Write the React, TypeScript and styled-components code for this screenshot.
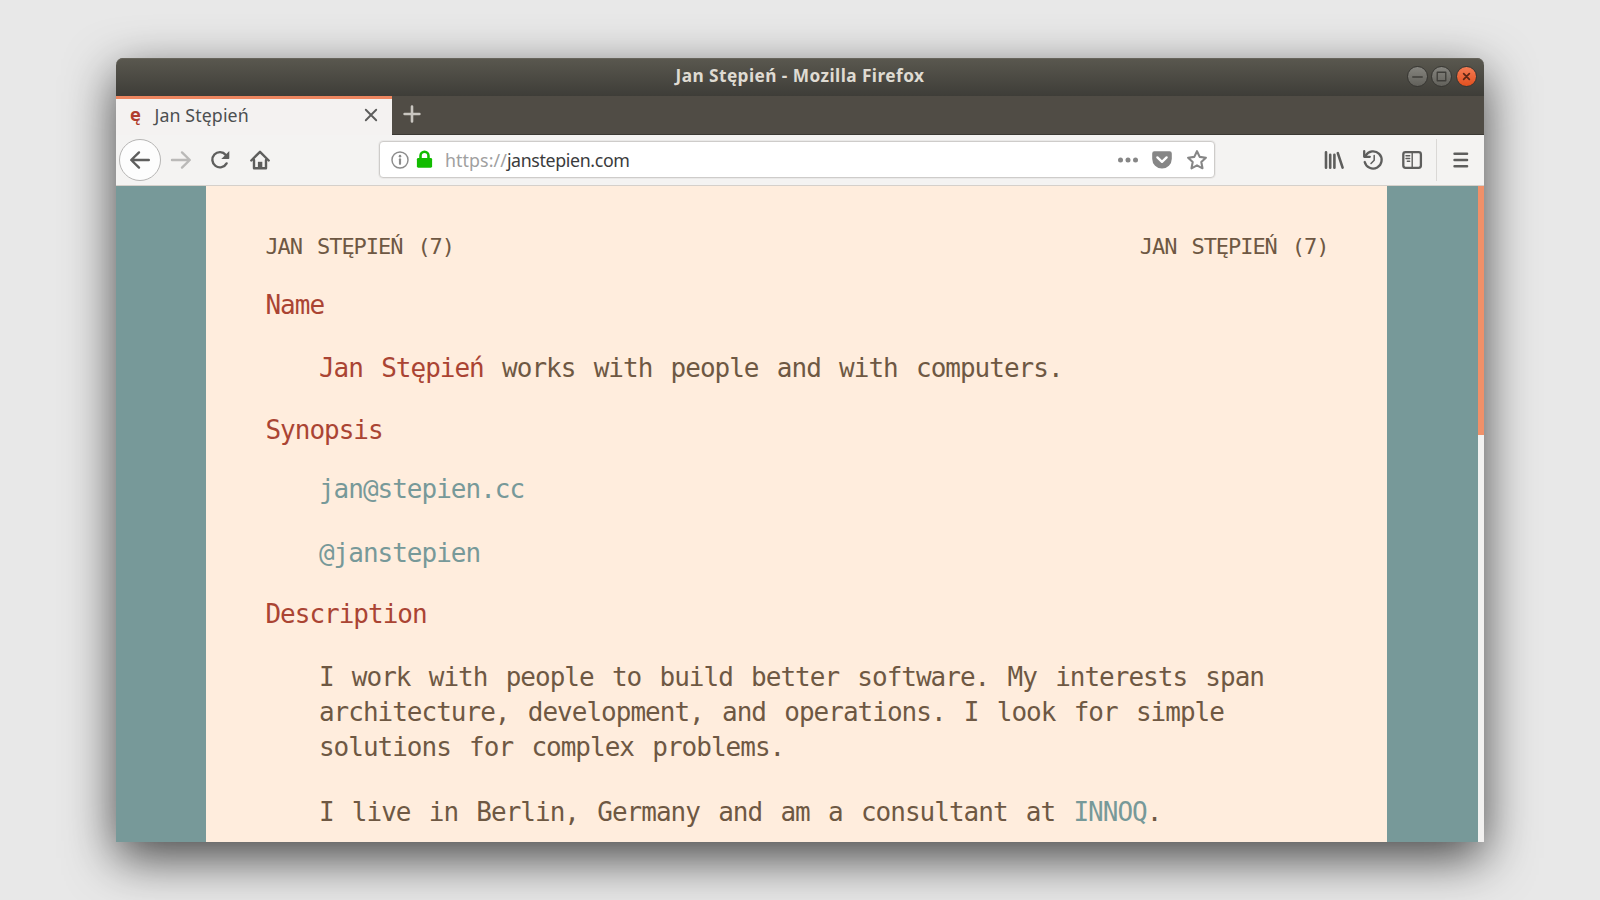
import React from "react";
import styled, { createGlobalStyle } from "styled-components";

const GlobalStyle = createGlobalStyle`
  * { box-sizing: border-box; }
  html, body { margin: 0; padding: 0; }
  body { background: #e8e8e8; overflow: hidden; }
`;

const ui = `"Noto Sans", "Open Sans", sans-serif`;
const mono = `"DejaVu Sans Mono", "Liberation Mono", monospace`;

const Desktop = styled.div`
  width: 1600px;
  height: 900px;
  padding: 57.5px 116px 0;
  background: #e8e8e8;
  overflow: hidden;
`;

const Window = styled.div`
  width: 1368px;
  height: 784.5px;
  display: flex;
  flex-direction: column;
  border-radius: 7px 7px 0 0;
  box-shadow: 0 16px 50px rgba(0, 0, 0, 0.7);
`;

const TitleBar = styled.header`
  flex: none;
  height: 38px;
  display: grid;
  grid-template-columns: 1fr auto 1fr;
  align-items: center;
  padding: 0 7px 1px 0;
  border-radius: 7px 7px 0 0;
  background: linear-gradient(#5a584f, #3e3d38);
  box-shadow: inset 0 1px 0 #66645b;
`;

const Title = styled.h1`
  grid-column: 2;
  margin: 0;
  padding-left: 7px;
  font: 700 17.3px/36px ${ui};
  letter-spacing: 0.43px;
  color: #dfdbd2;
  white-space: nowrap;
`;

const WindowButtons = styled.div`
  display: flex;
  justify-content: flex-end;
  gap: 3.6px;
`;

const WindowButton = styled.span<{ $close?: boolean }>`
  width: 21px;
  height: 21px;
  border-radius: 50%;
  border: 1px solid #373632;
  display: flex;
  background: ${(p) =>
    p.$close ? "linear-gradient(#f47c54, #e2501f)" : "linear-gradient(#85847e, #62615b)"};
  svg { margin: auto; }
`;

const TabStrip = styled.nav`
  flex: none;
  height: 39.5px;
  display: flex;
  background: #504c45;
  box-shadow: inset 0 -1px 0 #3b3934;
`;

const Tab = styled.div`
  width: 276px;
  height: 39.5px;
  padding: 0 13px 3px 14px;
  display: flex;
  align-items: center;
  background: #f4f2f1;
  border-top: 3px solid #ee8660;
`;

const Favicon = styled.span`
  width: 14px;
  font: 700 18px/34px ${mono};
  color: #b03e2e;
`;

const TabLabel = styled.span`
  flex: 1;
  padding-left: 10.5px;
  font: 400 17.8px/35px ${ui};
  letter-spacing: 0.1px;
  color: #4c4f50;
`;

const NewTab = styled.span`
  width: 40px;
  padding-bottom: 2px;
  display: flex;
  svg { margin: auto; }
`;

const Toolbar = styled.div`
  flex: none;
  height: 50.5px;
  padding: 0 3px 0 3px;
  display: flex;
  align-items: center;
  background: #f4f3f2;
  border-bottom: 1.5px solid #d5d0cb;
`;

const BackButton = styled.span`
  width: 42px;
  height: 42px;
  border-radius: 50%;
  border: 1px solid #b6b5b4;
  background: #fdfdfd;
  display: flex;
  svg { margin: auto; }
`;

const Slot = styled.span<{ $w?: number }>`
  width: ${(p) => p.$w ?? 39.6}px;
  display: flex;
  justify-content: center;
`;

const UrlBar = styled.div`
  margin-left: 99.2px;
  width: 836px;
  height: 37px;
  padding: 0 7px 0 11px;
  display: flex;
  align-items: center;
  background: #fff;
  border: 1px solid #ceccca;
  border-radius: 4px;
  box-shadow: 0 0 0 1px rgba(0, 0, 0, 0.04);
`;

const Url = styled.span`
  flex: 1;
  padding-left: 10.5px;
  font: 400 17.8px/34px ${ui};
  letter-spacing: -0.36px;
  color: #3a3b3c;
  white-space: nowrap;
`;

const Scheme = styled.span`
  letter-spacing: 0.08px;
  color: #a0a0a0;
`;

const Gap = styled.span<{ $w: number }>`
  width: ${(p) => p.$w}px;
`;

const Tools = styled.div`
  margin-left: auto;
  display: flex;
  align-items: center;
`;

const Separator = styled.span`
  width: 1px;
  height: 42px;
  margin: 0 0 0 4.5px;
  background: #dad8d6;
`;

const Viewport = styled.main`
  flex: 1;
  min-height: 0;
  display: flex;
  background: #779999;
  overflow: hidden;
`;

const Paper = styled.article`
  width: 1181px;
  margin-left: 90.4px;
  padding: 46px 59px 0 59px;
  background: #ffeddd;
  color: #6e5843;
  font: 400 26px/35.2px ${mono};
  letter-spacing: -0.99px;
  word-spacing: 3.6px;
`;

const PageHeader = styled.div`
  display: flex;
  justify-content: space-between;
  font-size: 22px;
  line-height: 30px;
  letter-spacing: -1.06px;
  word-spacing: 2.9px;
`;

const Heading = styled.h2<{ $top?: number }>`
  margin: ${(p) => p.$top ?? 26}px 0 0;
  font: inherit;
  color: #aa4433;
`;

const Para = styled.p<{ $top?: number }>`
  margin: ${(p) => p.$top ?? 28}px 0 0 53.5px;
  white-space: nowrap;
`;

const Accent = styled.strong`
  font-weight: 400;
  color: #aa4433;
`;

const Link = styled.a`
  color: #779999;
`;

const Track = styled.div`
  width: 6px;
  margin-left: auto;
  background: #f2f1f0;
`;

const Thumb = styled.div`
  height: 249px;
  background: #f09069;
`;

const Icon = styled.svg.attrs({ viewBox: "0 0 20 20", fill: "none" })<{ $c?: string; $s?: number }>`
  width: ${(p) => p.$s ?? 20}px;
  height: ${(p) => p.$s ?? 20}px;
  flex: none;
  overflow: visible;
  color: ${(p) => p.$c ?? "#5e5e5d"};
  stroke: currentColor;
  stroke-width: 2.4;
  stroke-linecap: round;
  stroke-linejoin: round;
`;

const Line = styled.g<{ $w?: number; $c?: string }>`
  stroke: ${(p) => p.$c ?? "currentColor"};
  stroke-width: ${(p) => p.$w ?? 2.4};
`;

const Filled = styled.g`
  fill: currentColor;
  stroke: none;
`;

export default function App() {
  return (
    <Desktop>
      <GlobalStyle />
      <Window>
        <TitleBar>
          <Title>Jan Stępień - Mozilla Firefox</Title>
          <WindowButtons>
            <WindowButton>
              <Icon $s={19} $c="#3f3e3a"><Line $w={1.4}><path d="M5 10.500h10" /></Line></Icon>
            </WindowButton>
            <WindowButton>
              <Icon $s={19} $c="#3f3e3a"><Line $w={1.4}><path d="M5.5 5.500h9v9h-9z" /></Line></Icon>
            </WindowButton>
            <WindowButton $close>
              <Icon $s={19} $c="#5c2615"><Line $w={1.8}><path d="M7 7l6 6M13 7l-6 6" /></Line></Icon>
            </WindowButton>
          </WindowButtons>
        </TitleBar>

        <TabStrip>
          <Tab>
            <Favicon>ę</Favicon>
            <TabLabel>Jan Stępień</TabLabel>
            <Icon $s={16} $c="#5d5d5c"><Line><path d="M3.5 3.500l13 13M16.500 3.500l-13 13" /></Line></Icon>
          </Tab>
          <NewTab>
            <Icon $c="#c9c6c0"><Line $w={2.6}><path d="M10 2.600v14.800M2.600 10h14.800" /></Line></Icon>
          </NewTab>
        </TabStrip>

        <Toolbar>
          <BackButton>
            <Icon><path d="M18.800 10H1.500M9 2.400L1.200 10L9 17.600" /></Icon>
          </BackButton>
          <Slot>
            <Icon $c="#bab9b8"><path d="M1 10h17.500M11 2.400l7.800 7.600L11 17.600" /></Icon>
          </Slot>
          <Slot>
            <Icon>
              <path d="M15.800 4.900A7.600 7.600 0 1 0 16.600 13.400" />
              <Filled><path d="M19.300 1v7.300a.8.8 0 0 1-.8.8h-7.200z" /></Filled>
            </Icon>
          </Slot>
          <Slot>
            <Icon>
              <path d="M1.300 10.500L10 1.800l8.700 8.700" />
              <path d="M4 10v8.200h12V10" />
              <Filled><path d="M7.900 19v-7.200h4.400V19z" /></Filled>
            </Icon>
          </Slot>

          <UrlBar>
            <Icon $s={18} $c="#8c8c8c">
              <Line $w={1.6}><circle cx="10" cy="10" r="8.900" /></Line>
              <Line $w={2.4}><path d="M10 9.300v5" /></Line>
              <Filled><circle cx="10" cy="5.700" r="1.400" /></Filled>
            </Icon>
            <Gap $w={6.5} />
            <Icon $s={19} $c="#12bc00">
              <Line $w={2.7}><path d="M5.800 9V6a4.200 4.200 0 0 1 8.400 0V9" /></Line>
              <Filled><rect x="2" y="8.300" width="16" height="10.300" rx="1.400" /></Filled>
            </Icon>
            <Url><Scheme>https://</Scheme>janstepien.com</Url>
            <Icon $c="#868686">
              <Filled>
                <circle cx="2.500" cy="10" r="2.500" />
                <circle cx="10" cy="10" r="2.500" />
                <circle cx="17.500" cy="10" r="2.500" />
              </Filled>
            </Icon>
            <Gap $w={14.5} />
            <Icon $c="#868686">
              <Filled><path d="M2.400 1.300h15.200a2.200 2.200 0 0 1 2.200 2.200v5.300a9.800 9.800 0 0 1-19.600 0V3.500a2.200 2.200 0 0 1 2.200-2.200z" /></Filled>
              <Line $c="#fff"><path d="M5.400 7.400L10 11.800l4.600-4.400" /></Line>
            </Icon>
            <Gap $w={14.5} />
            <Icon $c="#868686">
              <Line $w={2.1}>
                <path d="M10 1.200l2.700 5.700 6.200.8-4.600 4.300 1.200 6.300L10 15.300l-5.500 3 1.200-6.300L1.100 7.700l6.200-.8z" />
              </Line>
            </Icon>
          </UrlBar>

          <Tools>
            <Slot $w={39}>
              <Icon>
                <Line $w={2.6}><path d="M2 2.200v15.600M6.200 4.800v13M10.400 4.800v13M13.800 3.200l4.800 14.400" /></Line>
              </Icon>
            </Slot>
            <Slot $w={39}>
              <Icon>
                <Line $w={2.3}>
                  <path d="M2.600 5.600A8.600 8.600 0 1 1 1.700 12" />
                  <path d="M1.200 1.200v5.600h5.600" />
                </Line>
                <Line $w={1.5}><path d="M11.200 5.500v4.800L8 13.500" /></Line>
              </Icon>
            </Slot>
            <Slot $w={39}>
              <Icon>
                <Line $w={2.3}><rect x="1.300" y="2.200" width="17.600" height="15.600" rx="2.200" /></Line>
                <Line $w={1.4}><path d="M10.200 2.200v15.600M4 5.800h3.700M4 8.500h3.700M5.300 11.200h2.400" /></Line>
              </Icon>
            </Slot>
            <Separator />
            <Slot $w={44.5}>
              <Icon>
                <path d="M5.500 3.700h12.600M5.500 10h12.600M5.500 16.300h12.600" />
              </Icon>
            </Slot>
          </Tools>
        </Toolbar>

        <Viewport>
          <Paper>
            <PageHeader>
              <span>JAN STĘPIEŃ (7)</span>
              <span>JAN STĘPIEŃ (7)</span>
            </PageHeader>
            <Heading>Name</Heading>
            <Para><Accent>Jan Stępień</Accent> works with people and with computers.</Para>
            <Heading $top={27.3}>Synopsis</Heading>
            <Para $top={24}><Link>jan@stepien.cc</Link></Para>
            <Para><Link>@janstepien</Link></Para>
            <Heading>Description</Heading>
            <Para>
              I work with people to build better software. My interests span<br />
              architecture, development, and operations. I look for simple<br />
              solutions for complex problems.
            </Para>
            <Para $top={29}>
              I live in Berlin, Germany and am a consultant at <Link>INNOQ</Link>.
            </Para>
          </Paper>
          <Track><Thumb /></Track>
        </Viewport>
      </Window>
    </Desktop>
  );
}
